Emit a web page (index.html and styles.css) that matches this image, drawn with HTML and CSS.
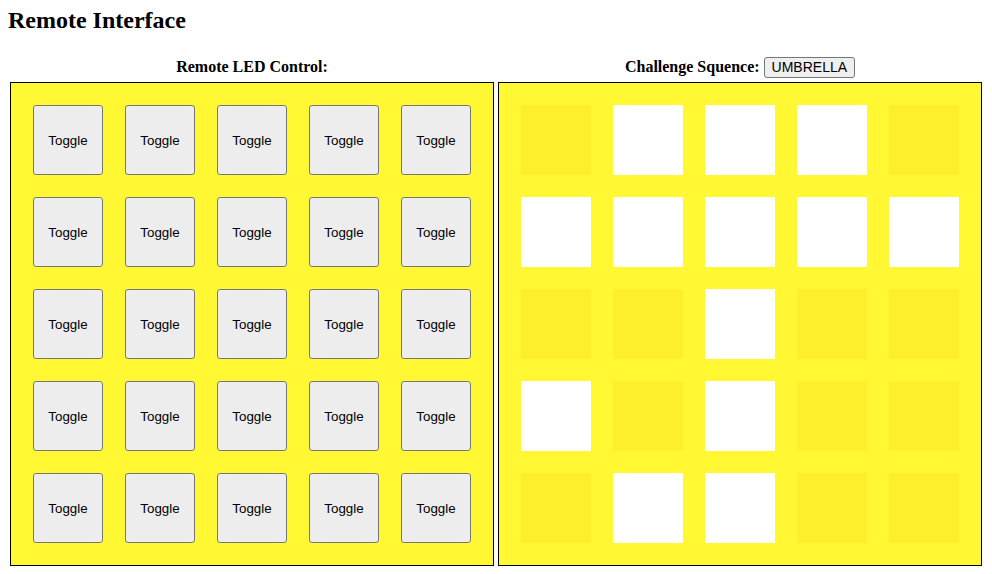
FILE: index.html
```html
<!DOCTYPE html>
<html>
<head>
    <meta charset="utf-8">
    <title>Remote Interface</title>
    <link rel="stylesheet" href="styles.css">
</head>
<body>
    <h1 class="title">Remote Interface</h1>

    <div class="panels">
        <div class="column">
            <div class="label">
                <span>Remote LED Control:</span>
            </div>
            <div class="board">
                <button class="toggle">Toggle</button>
                <button class="toggle">Toggle</button>
                <button class="toggle">Toggle</button>
                <button class="toggle">Toggle</button>
                <button class="toggle">Toggle</button>
                <button class="toggle">Toggle</button>
                <button class="toggle">Toggle</button>
                <button class="toggle">Toggle</button>
                <button class="toggle">Toggle</button>
                <button class="toggle">Toggle</button>
                <button class="toggle">Toggle</button>
                <button class="toggle">Toggle</button>
                <button class="toggle">Toggle</button>
                <button class="toggle">Toggle</button>
                <button class="toggle">Toggle</button>
                <button class="toggle">Toggle</button>
                <button class="toggle">Toggle</button>
                <button class="toggle">Toggle</button>
                <button class="toggle">Toggle</button>
                <button class="toggle">Toggle</button>
                <button class="toggle">Toggle</button>
                <button class="toggle">Toggle</button>
                <button class="toggle">Toggle</button>
                <button class="toggle">Toggle</button>
                <button class="toggle">Toggle</button>
            </div>
        </div>

        <div class="column">
            <div class="label">
                <span>Challenge Squence:</span>
                <button class="word">UMBRELLA</button>
            </div>
            <div class="board">
                <div class="led"></div>
                <div class="led on"></div>
                <div class="led on"></div>
                <div class="led on"></div>
                <div class="led"></div>

                <div class="led on"></div>
                <div class="led on"></div>
                <div class="led on"></div>
                <div class="led on"></div>
                <div class="led on"></div>

                <div class="led"></div>
                <div class="led"></div>
                <div class="led on"></div>
                <div class="led"></div>
                <div class="led"></div>

                <div class="led on"></div>
                <div class="led"></div>
                <div class="led on"></div>
                <div class="led"></div>
                <div class="led"></div>

                <div class="led"></div>
                <div class="led on"></div>
                <div class="led on"></div>
                <div class="led"></div>
                <div class="led"></div>
            </div>
        </div>
    </div>
</body>
</html>
```

FILE: styles.css
```css
body {
    font-family: "Liberation Serif", "Times New Roman", serif;
    color: #000;
    background-color: #FFF;
    margin: 0;
}

.title {
    font-size: 24px;
    font-weight: bold;
    line-height: 28px;
    margin: 6px 8px 0;
}

.panels {
    display: flex;
    gap: 4px;
    padding: 0 10px;
    margin-top: 22px;
}

.column {
    width: 484px;
}

.label {
    display: flex;
    justify-content: center;
    align-items: center;
    gap: 4px;
    height: 22px;
    margin-bottom: 4px;
    font-size: 16px;
    font-weight: bold;
}

.word {
    font-family: "Liberation Sans", Arial, sans-serif;
    font-size: 14px;
    line-height: 17px;
    padding: 1px 7px;
    color: #000;
    background-color: #EFEFEF;
    border: 1px solid #767676;
    border-radius: 3px;
}

.board {
    display: grid;
    grid-template-columns: repeat(5, 70px);
    grid-auto-rows: 70px;
    gap: 22px;
    padding: 22px;
    box-sizing: border-box;
    width: 484px;
    height: 484px;
    background-color: #FFF832;
    border: 1px solid #000;
}

.toggle {
    font-family: "Liberation Sans", Arial, sans-serif;
    font-size: 13.333px;
    color: #000;
    background-color: #EDEDED;
    border: 1px solid #767676;
    border-radius: 3px;
    padding: 0;
    margin: 0;
}

.led {
    background-color: #FFEF2B;
}

.led.on {
    background-color: #FFF;
}
```
